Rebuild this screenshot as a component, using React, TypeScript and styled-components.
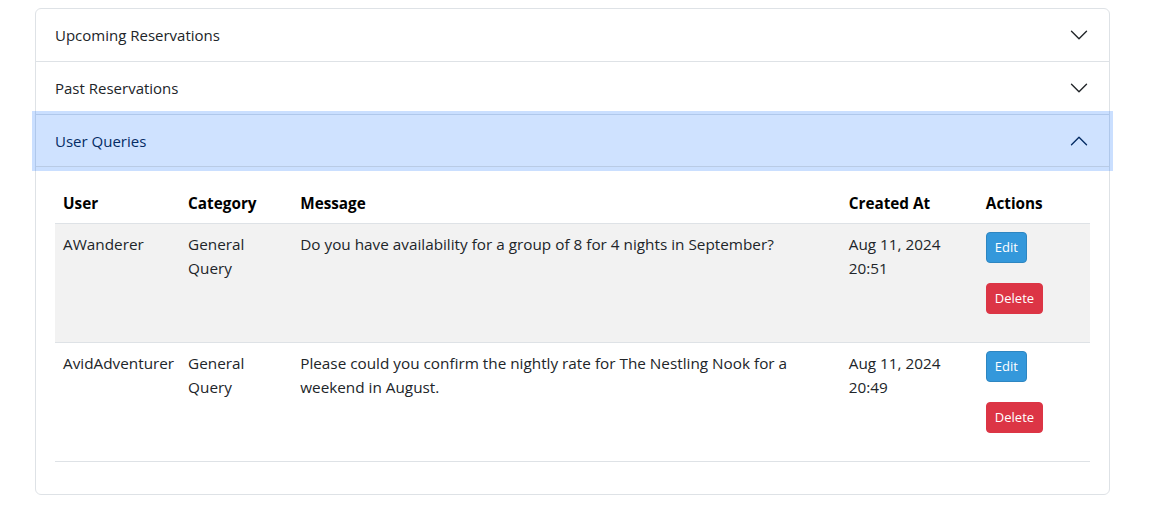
import styled, { createGlobalStyle } from "styled-components";

const GlobalStyle = createGlobalStyle`
  *, *::before, *::after {
    box-sizing: border-box;
  }
  body {
    margin: 0;
    padding: 8px 0 0 35px;
    background: #fff;
    font-family: "Open Sans", "Noto Sans", sans-serif;
    font-size: 15px;
    color: #212529;
  }
`;

const Accordion = styled.div`
  width: 1075px;
  border: 1px solid #dee2e6;
  border-radius: 6px;
  background: #fff;
`;

const Item = styled.div<{ last?: boolean }>`
  border-bottom: ${(props) => (props.last ? "none" : "1px solid #dee2e6")};
`;

const Header = styled.button<{ open?: boolean }>`
  position: relative;
  width: 100%;
  display: flex;
  align-items: center;
  justify-content: space-between;
  padding: 14px 20px 14px 19px;
  border: 0;
  font: inherit;
  line-height: 24px;
  text-align: left;
  cursor: pointer;
  color: ${(props) => (props.open ? "#052c65" : "#212529")};
  background: ${(props) => (props.open ? "#cfe2ff" : "transparent")};
  box-shadow: ${(props) =>
    props.open
      ? "inset 0 -1px 0 rgba(0,0,0,.1), 0 0 0 4px rgba(13,110,253,.22)"
      : "none"};
  z-index: ${(props) => (props.open ? 3 : 0)};
`;

const Chevron = styled.svg<{ open?: boolean }>`
  width: 20px;
  height: 20px;
  transform: ${(props) => (props.open ? "rotate(180deg)" : "none")};
`;

const Body = styled.div`
  padding: 16px 19px;
`;

const Table = styled.table`
  width: 100%;
  table-layout: fixed;
  border-collapse: collapse;
  margin-bottom: 16px;
  font-size: 15.3px;
  line-height: 24px;
`;

const Th = styled.th<{ w: number }>`
  width: ${(props) => props.w}px;
  padding: 8px;
  text-align: left;
  font-weight: 700;
  color: #000;
  border-bottom: 1px solid #dee2e6;
`;

const Row = styled.tr<{ striped?: boolean }>`
  background: ${(props) => (props.striped ? "#f2f2f2" : "#fff")};
  border-bottom: 1px solid #dee2e6;
`;

const Td = styled.td`
  padding: 8px 8px 28px;
  vertical-align: top;
`;

const Actions = styled.div`
  display: flex;
  flex-direction: column;
  align-items: flex-start;
  gap: 20px;
`;

const Button = styled.button<{ variant: "edit" | "delete" }>`
  font-family: inherit;
  font-size: 13px;
  line-height: 21px;
  padding: 4px 8px;
  border-radius: 4px;
  color: #fff;
  cursor: pointer;
  background: ${(props) => (props.variant === "edit" ? "#3498db" : "#dc3545")};
  border: 1px solid
    ${(props) => (props.variant === "edit" ? "#2e86c1" : "#dc3545")};
`;

interface IQuery {
  user: string;
  category: string;
  message: string;
  date: string;
  time: string;
}

const queries: IQuery[] = [
  {
    user: "AWanderer",
    category: "General Query",
    message: "Do you have availability for a group of 8 for 4 nights in September?",
    date: "Aug 11, 2024",
    time: "20:51",
  },
  {
    user: "AvidAdventurer",
    category: "General Query",
    message:
      "Please could you confirm the nightly rate for The Nestling Nook for a weekend in August.",
    date: "Aug 11, 2024",
    time: "20:49",
  },
];

function Arrow({ open }: { open?: boolean }) {
  return (
    <Chevron open={open} viewBox="0 0 16 16" fill="none">
      <path
        d="M2 5L8 11L14 5"
        stroke={open ? "#052c65" : "#212529"}
        strokeWidth="1.1"
        strokeLinecap="round"
        strokeLinejoin="round"
      />
    </Chevron>
  );
}

function App() {
  return (
    <>
      <GlobalStyle />
      <Accordion>
        <Item>
          <Header>
            Upcoming Reservations
            <Arrow />
          </Header>
        </Item>
        <Item>
          <Header>
            Past Reservations
            <Arrow />
          </Header>
        </Item>
        <Item last>
          <Header open>
            User Queries
            <Arrow open />
          </Header>
          <Body>
            <Table>
              <thead>
                <tr>
                  <Th w={125}>User</Th>
                  <Th w={112}>Category</Th>
                  <Th w={548}>Message</Th>
                  <Th w={137}>Created At</Th>
                  <Th w={112}>Actions</Th>
                </tr>
              </thead>
              <tbody>
                {queries.map((q, i) => (
                  <Row key={q.user} striped={i % 2 === 0}>
                    <Td>{q.user}</Td>
                    <Td>{q.category}</Td>
                    <Td>{q.message}</Td>
                    <Td>
                      {q.date}
                      <br />
                      {q.time}
                    </Td>
                    <Td>
                      <Actions>
                        <Button variant="edit">Edit</Button>
                        <Button variant="delete">Delete</Button>
                      </Actions>
                    </Td>
                  </Row>
                ))}
              </tbody>
            </Table>
          </Body>
        </Item>
      </Accordion>
    </>
  );
}

export default App;
